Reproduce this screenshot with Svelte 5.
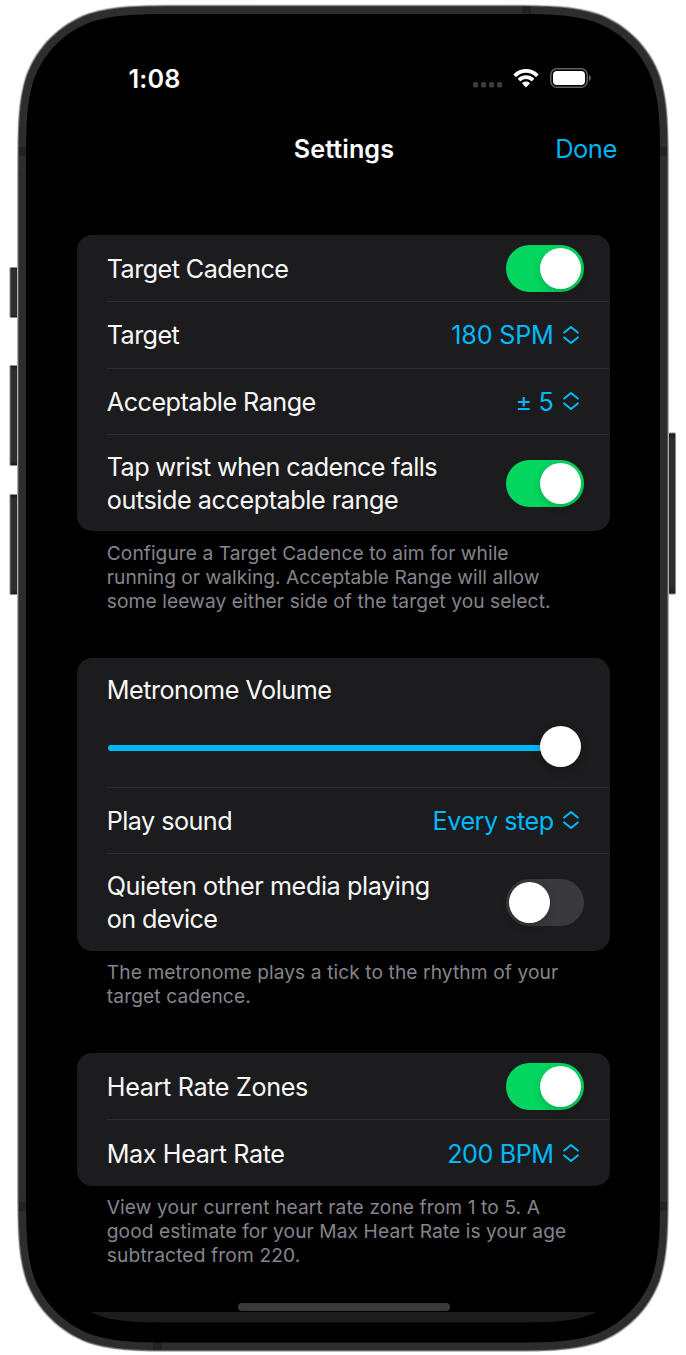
<script>
  // Continuous-curvature rounded rectangle.
  function squircle(x0, y0, x1, y1, r) {
    const p = (cx, cy, sx, sy, a, b) => `${(cx + sx * a * r).toFixed(2)} ${(cy + sy * b * r).toFixed(2)}`;
    const pts = [[1.5287, 0], [1.0885, 0], [0.8684, 0], [0.6315, 0.0749], [0.3728, 0.1691], [0.1691, 0.3728], [0.0749, 0.6315], [0, 0.8684], [0, 1.0885], [0, 1.5287]];
    const corner = (cx, cy, sx, sy, rev) => {
      const q = (rev ? [...pts].reverse() : pts).map(([a, b]) => p(cx, cy, sx, sy, a, b));
      return [q[0], `C${q[1]},${q[2]},${q[3]} C${q[4]},${q[5]},${q[6]} C${q[7]},${q[8]},${q[9]}`];
    };
    const c = [corner(x0, y0, 1, 1, true), corner(x1, y0, -1, 1, false), corner(x1, y1, -1, -1, true), corner(x0, y1, 1, -1, false)];
    return 'M' + c.map(([s, d]) => s + d).join(' L') + 'Z';
  }

  // Each text line carries its own tracking in px.
  const sections = [
    {
      rows: [
        { label: [['Target Cadence', -0.57]], kind: 'toggle', on: true, h: 66 },
        { label: [['Target', -0.6]], kind: 'picker', value: ['180 SPM', -0.2], h: 67 },
        { label: [['Acceptable Range', -0.52]], kind: 'picker', value: ['± 5', -0.3], h: 66 },
        { label: [['Tap wrist when cadence falls', -0.6], ['outside acceptable range', -0.44]], kind: 'toggle', on: true, h: 97 }
      ],
      note: [['Configure a Target Cadence to aim for while', 0.04], ['running or walking. Acceptable Range will allow', 0.02], ['some leeway either side of the target you select.', 0.08]],
      top: 10
    },
    {
      rows: [
        { label: [['Metronome Volume', -0.5]], kind: 'slider', h: 129 },
        { label: [['Play sound', -0.55]], kind: 'picker', value: ['Every step', -0.5], h: 66 },
        { label: [['Quieten other media playing', -0.42], ['on device', -0.6]], kind: 'toggle', on: false, h: 98 }
      ],
      note: [['The metronome plays a tick to the rhythm of your', 0.08], ['target cadence.', 0.1]],
      top: 9
    },
    {
      rows: [
        { label: [['Heart Rate Zones', -0.35]], kind: 'toggle', on: true, h: 66 },
        { label: [['Max Heart Rate', -0.42]], kind: 'picker', value: ['200 BPM', -0.45], h: 67 }
      ],
      note: [['View your current heart rate zone from 1 to 5. A', 0.09], ['good estimate for your Max Heart Rate is your age', 0.07], ['subtracted from 220.', 0.13]],
      top: 9
    }
  ];
</script>

<div class="page">
  <svg class="device" width="686" height="1355" viewBox="0 0 686 1355" aria-hidden="true">
    <defs>
      <linearGradient id="key" x1="0" x2="0" y1="0" y2="1">
        <stop offset="0" stop-color="#1c1c1c" /><stop offset=".05" stop-color="#2e2e2e" /><stop offset=".95" stop-color="#2e2e2e" /><stop offset="1" stop-color="#1c1c1c" />
      </linearGradient>
      <clipPath id="display"><path d={squircle(46, 33, 641, 1322.5, 86)} /></clipPath>
    </defs>
    <g fill="url(#key)" stroke="#8b8b8b" stroke-width="1">
      <rect x="10" y="267.5" width="10" height="50" rx="1" />
      <rect x="10" y="365.5" width="10" height="100" rx="1" />
      <rect x="10" y="494.5" width="10" height="100" rx="1" />
      <rect x="666" y="433" width="9.5" height="161" rx="1" />
    </g>
    <path d={squircle(17, 4.5, 669, 1352, 112)} fill="#d0d0d0" />
    <path d={squircle(17.6, 5.2, 668.4, 1351.3, 112)} fill="#777" />
    <path d={squircle(18.6, 6.2, 667.4, 1350.3, 111)} fill="#2d2d2d" />
    <g fill="#222">
      <rect x="19" y="147" width="8" height="9" /><rect x="659" y="147" width="8" height="9" />
      <rect x="19" y="1202" width="8" height="9" /><rect x="659" y="1202" width="8" height="9" />
      <rect x="522" y="6.5" width="9" height="8" /><rect x="153" y="1342" width="9" height="8" />
    </g>
    <path d={squircle(26, 14, 660, 1342.5, 104)} fill="#000" />
    <rect x="46" y="1312" width="595" height="12" fill="#1c1c1e" clip-path="url(#display)" />
  </svg>

  <main>
    <header class="status">
      <span class="time">1:08</span>
      <div class="indicators">
        <svg width="30" height="6" viewBox="0 0 30 6" fill="#3b3b3d">
          <rect x="0" y="0" width="5.2" height="5.4" rx="1.5" /><rect x="8" y="0" width="5.2" height="5.4" rx="1.5" /><rect x="16" y="0" width="5.2" height="5.4" rx="1.5" /><rect x="24" y="0" width="5.2" height="5.4" rx="1.5" />
        </svg>
        <svg class="wifi" width="26" height="19" viewBox="0 0 26 19" fill="#fff">
          <path d="M13 0C17.7 0 22 1.8 25.2 4.9Q25.7 5.4 25.2 5.9L23.4 7.7Q23 8.1 22.5 7.7A13.7 13.7 0 0 0 3.5 7.7Q3 8.1 2.6 7.7L.8 5.9Q.3 5.4.8 4.9C4 1.8 8.3 0 13 0Z" />
          <path d="M13 6.3C16 6.3 18.8 7.4 20.9 9.3Q21.4 9.8 20.9 10.3L19.1 12.1Q18.7 12.5 18.2 12.1A7.7 7.7 0 0 0 7.8 12.1Q7.3 12.5 6.9 12.1L5.1 10.3Q4.6 9.8 5.1 9.3C7.2 7.4 10 6.3 13 6.3Z" />
          <path d="M13 12.6C14.4 12.6 15.6 13.1 16.6 13.8Q17.1 14.3 16.6 14.8L13.5 18Q13 18.5 12.5 18L9.4 14.8Q8.9 14.3 9.4 13.8C10.4 13.1 11.6 12.6 13 12.6Z" />
        </svg>
        <svg class="battery" width="42" height="20" viewBox="0 0 42 20">
          <rect x=".8" y=".8" width="36.4" height="18.4" rx="6" fill="none" stroke="#626262" stroke-width="1.5" />
          <rect x="3" y="3" width="32" height="14" rx="4" fill="#fff" />
          <path d="M39 7Q41 7.8 41 10Q41 12.2 39 13Z" fill="#626262" />
        </svg>
      </div>
    </header>

    <nav>
      <h1>Settings</h1>
      <button class="done">Done</button>
    </nav>

    {#each sections as s}
      <section>
        <div class="card">
          {#each s.rows as r}
            <div class="row {r.kind}" style:height="{r.h}px">
              <div class="label">{#each r.label as [text, ls]}<span style:letter-spacing="{ls}px">{text}</span>{/each}</div>
              {#if r.kind === 'toggle'}
                <div class="switch" class:on={r.on}><i></i></div>
              {:else if r.kind === 'picker'}
                <div class="value">
                  <span style:letter-spacing="{r.value[1]}px">{r.value[0]}</span>
                  <svg width="16" height="18" viewBox="0 0 16 18" fill="none" stroke="#00b9fb" stroke-width="2" stroke-linecap="round" stroke-linejoin="round">
                    <path d="M1.2 6.6 8 1l6.8 5.6M1.2 11.4 8 17l6.8-5.6" />
                  </svg>
                </div>
              {:else}
                <div class="track"><div class="fill"></div><i></i></div>
              {/if}
            </div>
          {/each}
        </div>
        <p style:margin-top="{s.top}px">{#each s.note as [text, ls]}<span style:letter-spacing="{ls}px">{text}</span>{/each}</p>
      </section>
    {/each}
  </main>
  <div class="home"></div>
</div>

<style>
  :global(body) { margin: 0; background: #fff; }
  .page { position: relative; width: 686px; height: 1355px; overflow: hidden; font-family: Inter, "Liberation Sans", sans-serif; color: #f8f8f8; }
  .device { position: absolute; inset: 0; }
  main { position: relative; box-sizing: border-box; padding: 58px 75.6px 0 76.6px; }
  .status { display: flex; justify-content: space-between; align-items: center; height: 40px; padding: 0 18.4px 0 52px; color: #fff; }
  .time { font-size: 25.2px; font-weight: 600; letter-spacing: .1px; padding-top: 1px; }
  .indicators { display: flex; align-items: center; }
  .indicators svg:first-child { margin-top: 14px; }
  .wifi { margin-left: 10px; }
  .battery { margin-left: 11px; }
  nav { display: grid; grid-template-columns: 1fr auto 1fr; align-items: center; height: 40px; margin: 31px -6.4px 66px 0; }
  h1 { grid-column: 2; margin: 0 5.6px 0 0; font-size: 25.2px; font-weight: 600; letter-spacing: .05px; color: #fff; }
  .done { justify-self: end; border: 0; background: none; padding: 0 0 1px; font: 400 25.5px Inter, sans-serif; letter-spacing: -.5px; color: #00b3f4; }
  section { margin-bottom: 45px; }
  section:first-of-type { margin-bottom: 44px; }
  .card { background: #1c1c1e; border-radius: 15px; overflow: hidden; }
  .row { box-sizing: border-box; display: flex; align-items: center; justify-content: space-between; margin-left: 30.2px; padding-right: 26.8px; }
  .row + .row { border-top: 1px solid #2c2c2e; }
  .label { font-size: 25.2px; line-height: 33px; padding-top: 1px; }
  .toggle:first-child .label { padding-top: 3px; }
  section:nth-of-type(2) .picker, section:nth-of-type(3) .picker { padding-top: 1px; }
  .label span, p span { display: block; white-space: nowrap; }
  .switch { box-sizing: border-box; flex: none; width: 78px; height: 47px; border-radius: 24px; padding: 3px; background: #39393d; display: flex; }
  .switch.on { background: #04d65f; justify-content: flex-end; }
  .switch i { width: 41px; height: 41px; border-radius: 50%; background: #fff; box-shadow: 0 3px 9px rgba(0,0,0,.18); }
  .value { display: flex; align-items: center; gap: 9px; margin-right: 5px; font-size: 25.2px; color: #00b9fb; }
  .value svg { margin-top: -1px; }
  .slider { flex-direction: column; align-items: stretch; justify-content: flex-start; padding-top: 15px; }
  .track { display: flex; align-items: center; height: 41px; margin: 19px 3px 0 1px; }
  .fill { flex: 1; height: 6px; border-radius: 3px 0 0 3px; background: #00b9fb; margin: 3px -2px 0 0; }
  .track i { width: 41px; height: 41px; border-radius: 50%; background: #fff; box-shadow: 0 3px 10px rgba(0,0,0,.25); }
  p { margin: 0 0 0 30.2px; font-size: 19.2px; line-height: 24.2px; color: #85858b; }
  .home { position: absolute; left: 238px; top: 1303px; width: 212px; height: 8px; border-radius: 4px; background: #3a3a3a; }
</style>
